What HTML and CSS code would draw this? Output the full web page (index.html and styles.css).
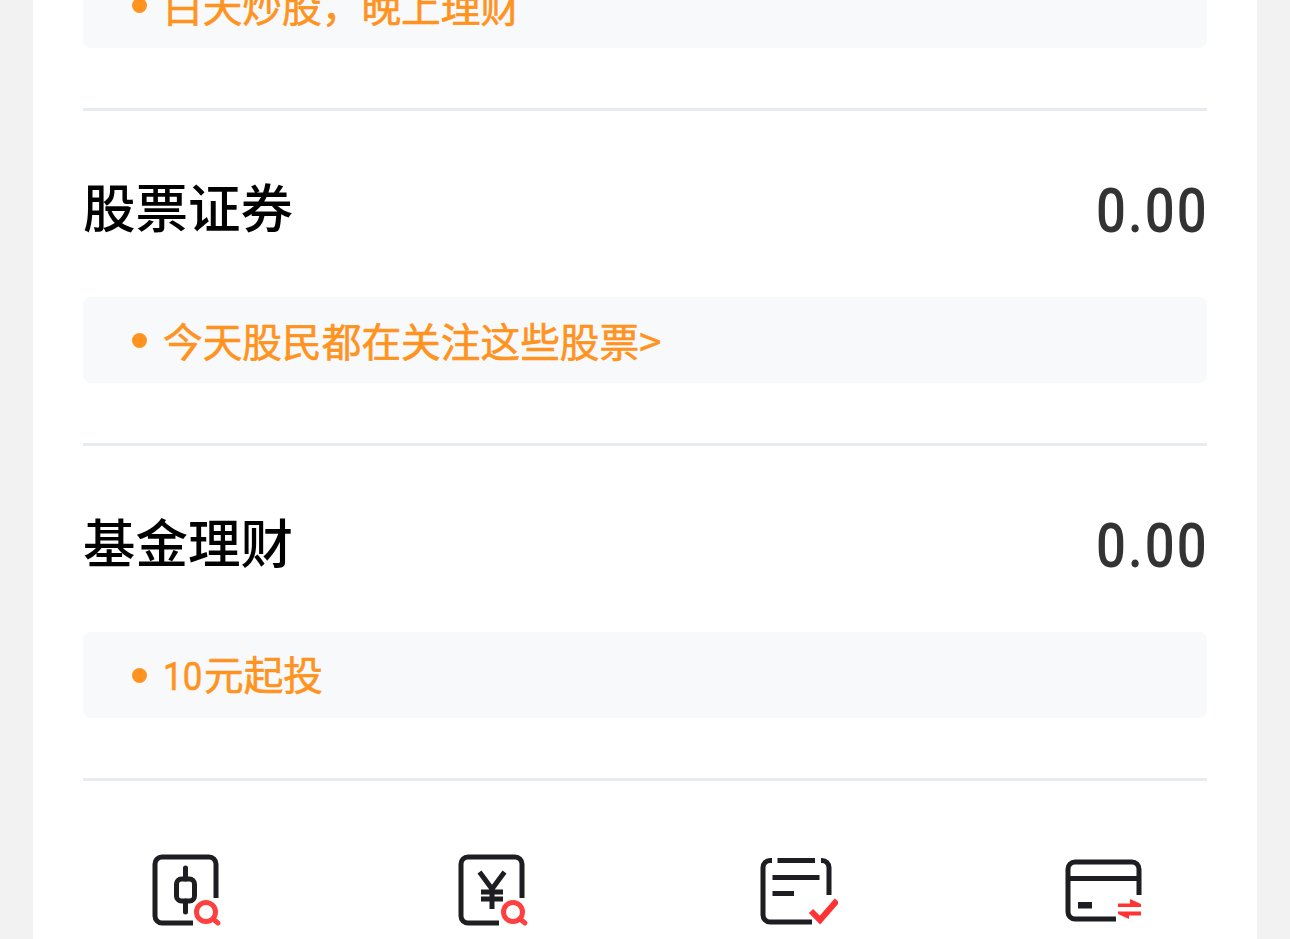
FILE: index.html
```html
<!DOCTYPE html>
<html lang="zh-CN">
<head>
<meta charset="utf-8">
<title>资产</title>
<link rel="stylesheet" href="styles.css">
</head>
<body>
<main class="card">
  <div class="sections">
    <section class="section">
      <div class="note"><span class="dot"></span><span class="note-text">白天炒股，晚上理财</span></div>
    </section>
    <section class="section">
      <div class="head"><h2 class="title">股票证券</h2><span class="amount">0.00</span></div>
      <div class="note"><span class="dot"></span><span class="note-text">今天股民都在关注这些股票&gt;</span></div>
    </section>
    <section class="section">
      <div class="head"><h2 class="title">基金理财</h2><span class="amount">0.00</span></div>
      <div class="note"><span class="dot"></span><span class="note-text"><span class="digits">10</span>元起投</span></div>
    </section>
  </div>
  <nav class="tools">
    <a class="tool"><svg class="icon" viewBox="0 0 80 80" fill="none">
      <path class="ink" d="M47 73H16a7 7 0 0 1-7-7V14a7 7 0 0 1 7-7h47a7 7 0 0 1 7 7v34"/>
      <rect class="ink" x="30.5" y="29" width="18" height="22" rx="5"/>
      <path class="ink round" d="M39.5 18v11M39.5 51v11"/>
      <circle class="red" cx="60" cy="62" r="9.5"/>
      <path class="red round" d="M67 69l5 4"/>
    </svg></a>
    <a class="tool"><svg class="icon" viewBox="0 0 80 80" fill="none">
      <path class="ink" d="M47 73H16a7 7 0 0 1-7-7V14a7 7 0 0 1 7-7h47a7 7 0 0 1 7 7v34"/>
      <path class="ink" d="M27.500 22l12.500 17 12.500-17M29 42h22M29 49h22M40 39v20"/>
      <circle class="red" cx="61" cy="62" r="9.5"/>
      <path class="red round" d="M68 69l5 4"/>
    </svg></a>
    <a class="tool"><svg class="icon" viewBox="0 0 80 80" fill="none">
      <path class="ink" d="M14 10.500H12a7 7 0 0 0-7 7V65a7 7 0 0 0 7 7h42M19.500 10.500H57M63 10.500h1a7 7 0 0 1 7 7V45M14.500 27.500h47M14.500 43.500H36"/>
      <path class="red wide" d="M53 61l9 9 17-19.500"/>
    </svg></a>
    <a class="tool"><svg class="icon" viewBox="0 0 80 80" fill="none">
      <path class="ink" d="M52 69H11a7 7 0 0 1-7-7V19a7 7 0 0 1 7-7h57a7 7 0 0 1 7 7v26M4 28.500h71"/>
      <rect class="ink-fill" x="14" y="52" width="14" height="6.500"/>
      <path class="red-fill" d="M54 53.500h12V49l11 5v3H54zM77 61.500H54V64l11 5v-3.500h12z"/>
    </svg></a>
  </nav>
</main>
</body>
</html>
```
FILE: styles.css
```css
* { box-sizing: border-box; }
html, body { margin: 0; height: 939px; overflow: hidden; }
body {
  background: #f2f2f2;
  font-family: "Noto Sans CJK SC", "Noto Sans", sans-serif;
}
.card {
  width: 1224px;
  margin: -38px 0 0 33px;
  background: #fff;
  min-height: 1100px;
}
.sections { padding: 0 50px; }
.section {
  padding-bottom: 60px;
  border-bottom: 3px solid #e8ebf0;
}
.head {
  height: 186px;
  display: flex;
  justify-content: space-between;
  align-items: center;
}
.title {
  margin: 0 0 -2px;
  font-size: 52.5px;
  font-weight: 500;
  line-height: 70px;
  color: #000;
}
.amount {
  display: inline-block;
  margin: 13px -2px 0 0;
  font-family: Roboto, sans-serif;
  font-size: 62px;
  font-weight: 500;
  letter-spacing: 2.500px;
  line-height: 70px;
  color: #333;
  transform: scaleX(.85);
  transform-origin: right center;
}
.note {
  height: 86px;
  display: flex;
  align-items: center;
  gap: 16px;
  padding-left: 49px;
  background: #f8f9fb;
  border-radius: 8px;
}
.dot {
  width: 15px;
  height: 15px;
  border-radius: 50%;
  background: #ff9320;
}
.note-text {
  font-size: 39.7px;
  font-weight: 400;
  line-height: 60px;
  color: #ff9320;
  -webkit-text-stroke: .6px #ff9320;
}
.digits {
  display: inline-block;
  width: 41px;
  font-family: Roboto, sans-serif;
  transform: scaleX(.88);
  transform-origin: left center;
}
.tools {
  display: grid;
  grid-template-columns: repeat(4, 306px);
  padding-top: 69px;
}
.tool { display: flex; justify-content: center; }
.icon { width: 80px; height: 80px; display: block; }
.ink { stroke: #1d1d22; stroke-width: 5; }
.round { stroke-linecap: round; }
.red { stroke: #ff4040; stroke-width: 5; }
.wide { stroke: #ff3333; stroke-width: 6; }
.ink-fill { fill: #1d1d22; }
.red-fill { fill: #ff3333; }
```
